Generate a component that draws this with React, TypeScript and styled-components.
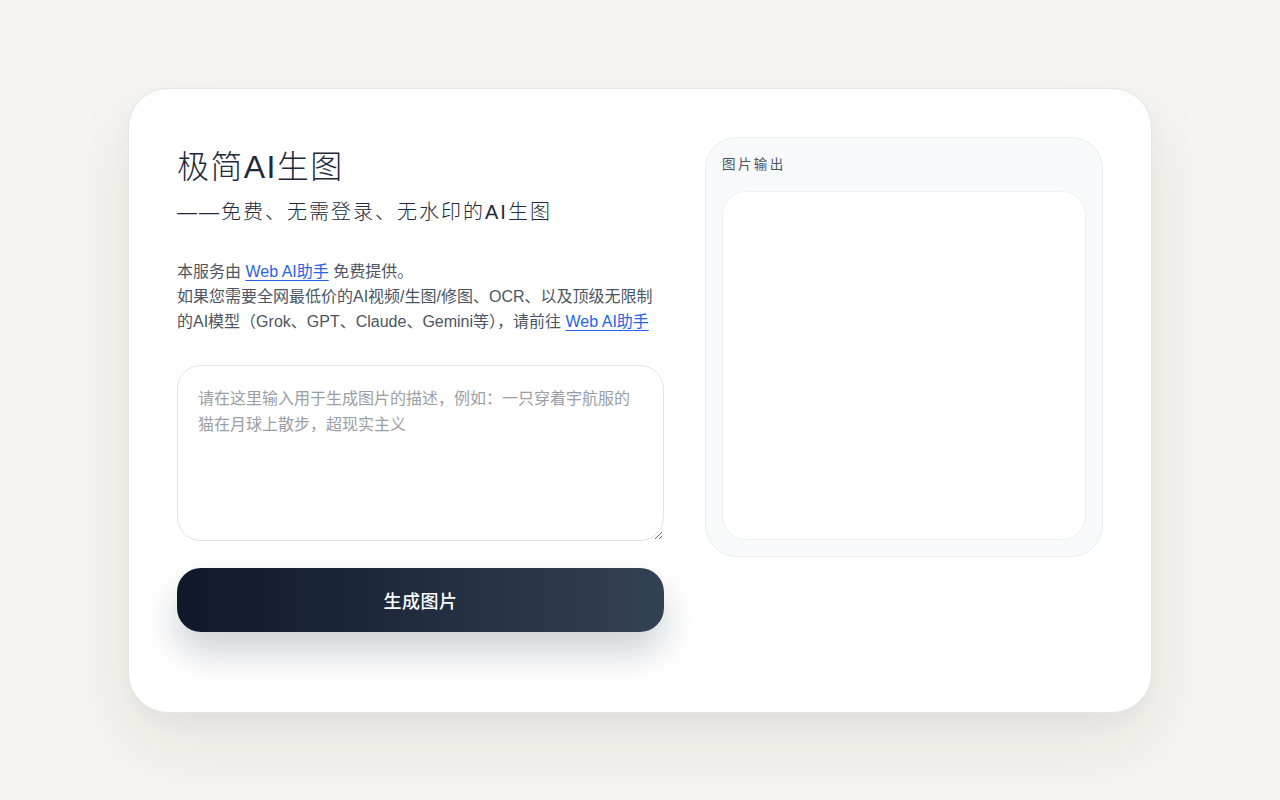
import React, { useState } from 'react';
import styled, { createGlobalStyle } from 'styled-components';

const GlobalStyle = createGlobalStyle`
  * {
    box-sizing: border-box;
  }
  body {
    margin: 0;
    background: #f5f4f0;
    font-family: "Liberation Sans", "Noto Sans CJK SC", sans-serif;
    color: #1e293b;
  }
`;

const Page = styled.div`
  min-height: 100vh;
  display: flex;
  align-items: center;
  justify-content: center;
`;

const Card = styled.main`
  width: 1024px;
  background: #ffffff;
  border: 1px solid #e7e6e3;
  border-radius: 40px;
  padding: 48px 48px 48px;
  display: grid;
  grid-template-columns: 487px 398px;
  column-gap: 41px;
  align-items: start;
  box-shadow: 0 30px 70px rgba(40, 36, 30, 0.08), 0 8px 20px rgba(40, 36, 30, 0.03);
`;

const LeftColumn = styled.section`
  display: flex;
  flex-direction: column;
  padding-top: 10px;
  padding-bottom: 32px;
`;

const Title = styled.h1`
  margin: 0;
  font-family: "Liberation Sans", "Noto Sans CJK SC", sans-serif;
  font-size: 32px;
  font-weight: 300;
  line-height: 40px;
  letter-spacing: 1.4px;
  color: #1e293b;
`;

const Subtitle = styled.h2`
  margin: 11px 0 0;
  font-family: "Liberation Sans", "Noto Sans CJK SC", sans-serif;
  font-size: 20px;
  font-weight: 300;
  line-height: 28px;
  letter-spacing: 2px;
  color: #1e293b;
`;

const Intro = styled.p`
  margin: 33px 0 0;
  font-size: 16px;
  line-height: 25px;
  color: #4b5563;
`;

const Link = styled.a`
  color: #2563eb;
  text-decoration: underline;
  text-decoration-thickness: 1px;
  text-underline-offset: 3px;
`;

const Prompt = styled.textarea`
  display: block;
  margin-top: 31px;
  width: 100%;
  height: 176px;
  padding: 20px 20px;
  border: 1px solid #e3e4e8;
  border-radius: 24px;
  background: #ffffff;
  font-family: "Liberation Sans", "Noto Sans CJK SC", sans-serif;
  font-size: 16px;
  line-height: 26px;
  color: #1e293b;
  resize: vertical;
  outline: none;

  &::placeholder {
    color: #9a9ea6;
  }
`;

const GenerateButton = styled.button`
  margin-top: 27px;
  height: 64px;
  width: 100%;
  border: none;
  border-radius: 24px;
  background: linear-gradient(90deg, #0f172a 0%, #334155 100%);
  color: #ffffff;
  font-family: "Liberation Sans", "Noto Sans CJK SC", sans-serif;
  font-size: 18px;
  font-weight: 500;
  letter-spacing: 0.5px;
  cursor: pointer;
  box-shadow: 0 20px 36px rgba(15, 23, 42, 0.2);
`;

const OutputPanel = styled.section`
  background: #f8f9fb;
  border: 1px solid #eaecef;
  border-radius: 32px;
  padding: 16px;
  display: flex;
  flex-direction: column;
  gap: 16px;
`;

const OutputLabel = styled.div`
  font-size: 13.5px;
  line-height: 20px;
  letter-spacing: 2.4px;
  color: #4b5563;
  padding-top: 1px;
`;

const OutputFrame = styled.div`
  height: 349px;
  background: #ffffff;
  border: 1px solid #eef0f3;
  border-radius: 24px;
`;

export default function App(): React.ReactElement {
  const [prompt, setPrompt] = useState('');

  return (
    <>
      <GlobalStyle />
      <Page>
        <Card>
          <LeftColumn>
            <Title>极简AI生图</Title>
            <Subtitle>——免费、无需登录、无水印的AI生图</Subtitle>
            <Intro>
              本服务由 <Link href="#">Web AI助手</Link> 免费提供。
              <br />
              如果您需要全网最低价的AI视频/生图/修图、OCR、以及顶级无限制的AI模型（Grok、GPT、Claude、Gemini等），请前往{' '}
              <Link href="#">Web AI助手</Link>
            </Intro>
            <Prompt
              value={prompt}
              onChange={e => setPrompt(e.target.value)}
              placeholder="请在这里输入用于生成图片的描述，例如：一只穿着宇航服的猫在月球上散步，超现实主义"
            />
            <GenerateButton type="button">生成图片</GenerateButton>
          </LeftColumn>
          <OutputPanel>
            <OutputLabel>图片输出</OutputLabel>
            <OutputFrame />
          </OutputPanel>
        </Card>
      </Page>
    </>
  );
}
